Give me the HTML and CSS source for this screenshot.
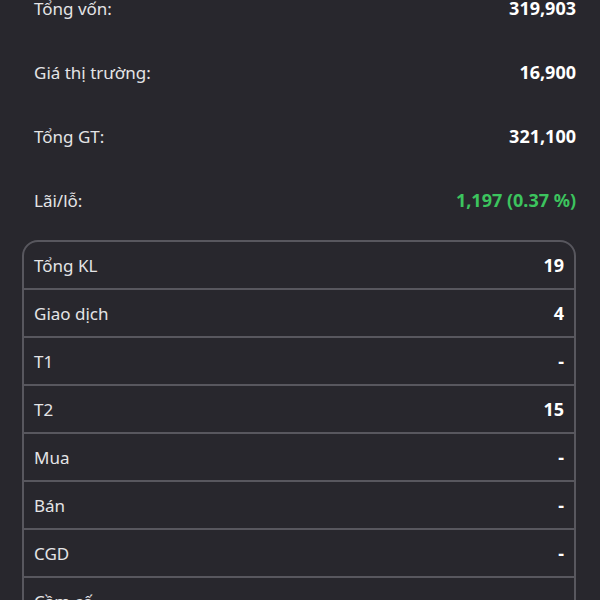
FILE: index.html
```html
<!DOCTYPE html>
<html lang="vi">
<head>
<meta charset="utf-8">
<link rel="stylesheet" href="styles.css">
</head>
<body>
<div class="page">
  <div class="summary">
    <div class="srow"><span class="label">Tổng vốn:</span><span class="value">319,903</span></div>
    <div class="srow"><span class="label">Giá thị trường:</span><span class="value">16,900</span></div>
    <div class="srow"><span class="label">Tổng GT:</span><span class="value">321,100</span></div>
    <div class="srow"><span class="label">Lãi/lỗ:</span><span class="value up">1,197 (0.37 %)</span></div>
  </div>
  <div class="box">
    <div class="brow"><span class="label">Tổng KL</span><span class="value">19</span></div>
    <div class="brow"><span class="label">Giao dịch</span><span class="value">4</span></div>
    <div class="brow"><span class="label">T1</span><span class="value">-</span></div>
    <div class="brow"><span class="label">T2</span><span class="value">15</span></div>
    <div class="brow"><span class="label">Mua</span><span class="value">-</span></div>
    <div class="brow"><span class="label">Bán</span><span class="value">-</span></div>
    <div class="brow"><span class="label">CGD</span><span class="value">-</span></div>
    <div class="brow"><span class="label">Cầm cố</span><span class="value">-</span></div>
  </div>
</div>
</body>
</html>
```
FILE: styles.css
```css
html, body {
  margin: 0;
  padding: 0;
  background: #28272d;
  height: 600px;
  overflow: hidden;
}
body {
  font-family: "Noto Sans", "Open Sans", sans-serif;
  font-size: 17px;
  color: #e4e4e6;
}
.page {
  margin-top: -24px;
  padding: 0 24px 0 22px;
}
.summary {
  padding: 0 0 0 12px;
}
.srow {
  height: 64px;
  display: flex;
  align-items: center;
  justify-content: space-between;
}
.value {
  font-weight: 700;
  font-size: 18px;
  color: #ffffff;
}
.value.up {
  color: #3cc45e;
}
.box {
  margin-top: 8px;
  border: 2px solid #58575e;
  border-radius: 16px;
}
.brow {
  height: 46px;
  padding: 0 10px;
  display: flex;
  align-items: center;
  justify-content: space-between;
  border-bottom: 2px solid #58575e;
}
```
